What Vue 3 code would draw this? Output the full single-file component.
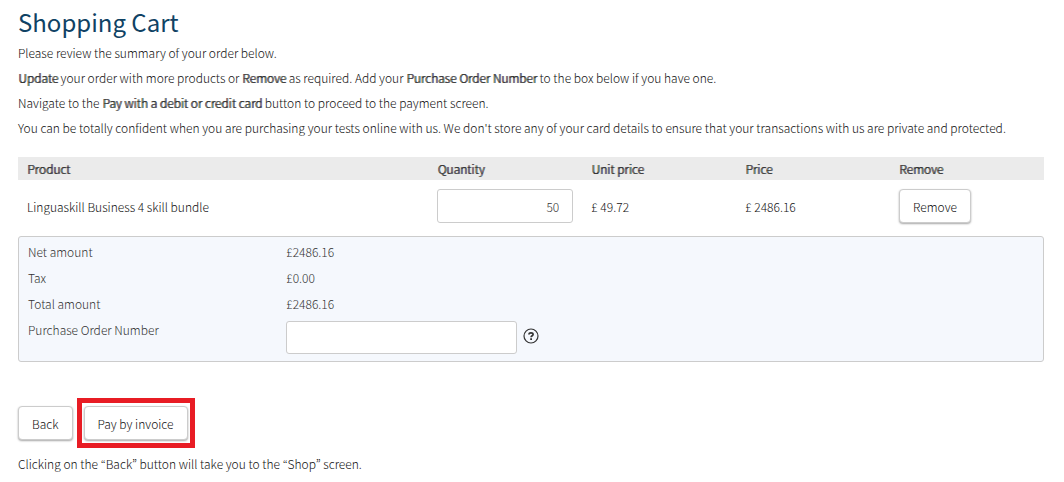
<template>
  <main class="cart-page">
    <h1 class="cart-title">Shopping Cart</h1>

    <div class="intro">
      <p>Please review the summary of your order below.</p>
      <p>
        <strong>Update</strong> your order with more products or <strong>Remove</strong> as required.
        Add your <strong>Purchase Order Number</strong> to the box below if you have one.
      </p>
      <p>
        Navigate to the <strong>Pay with a debit or credit card</strong> button to proceed to the
        payment screen.
      </p>
      <p>
        You can be totally confident when you are purchasing your tests online with us. We don't
        store any of your card details to ensure that your transactions with us are private and
        protected.
      </p>
    </div>

    <table class="cart-table">
      <thead>
        <tr>
          <th class="col-product" scope="col">Product</th>
          <th scope="col">Quantity</th>
          <th scope="col">Unit price</th>
          <th scope="col">Price</th>
          <th scope="col">Remove</th>
        </tr>
      </thead>
      <tbody>
        <tr v-for="item in items" :key="item.id">
          <td>{{ item.name }}</td>
          <td>
            <input
              v-model="item.quantity"
              class="field field-quantity"
              type="text"
              inputmode="numeric"
              :aria-label="`Quantity of ${item.name}`"
            />
          </td>
          <td>£ {{ item.unitPrice.toFixed(2) }}</td>
          <td>£ {{ item.price.toFixed(2) }}</td>
          <td><button class="btn" type="button">Remove</button></td>
        </tr>
      </tbody>
    </table>

    <section class="summary">
      <div v-for="row in totals" :key="row.label" class="summary-row">
        <span>{{ row.label }}</span>
        <span>£{{ row.amount.toFixed(2) }}</span>
      </div>
      <div class="summary-row">
        <label for="po-number">Purchase Order Number</label>
        <div class="po-field">
          <input id="po-number" v-model="poNumber" class="field field-po" type="text" />
          <button class="help" type="button" aria-label="Help">
            <svg viewBox="0 0 16 16" width="16" height="16" fill="none" stroke="#333">
              <circle cx="8" cy="8" r="7" stroke-width="1.2" />
              <path d="M5.9 6.5C6 5.300 6.900 4.800 8 4.800c1.200 0 2.100.6 2.100 1.600 0 1.300-2 1.400-2 2.800" stroke-width="1.700" />
              <path d="M8.100 10.200v1.700" stroke-width="1.800" />
            </svg>
          </button>
        </div>
      </div>
    </section>

    <div class="actions">
      <button class="btn" type="button">Back</button>
      <div class="highlight">
        <button class="btn" type="button">Pay by invoice</button>
      </div>
    </div>

    <p class="note">Clicking on the “Back” button will take you to the “Shop” screen.</p>
  </main>
</template>

<script setup>
import { ref } from 'vue';

const items = ref([
  { id: 1, name: 'Linguaskill Business 4 skill bundle', quantity: '50', unitPrice: 49.72, price: 2486.16 }
]);

const totals = [
  { label: 'Net amount', amount: 2486.16 },
  { label: 'Tax', amount: 0 },
  { label: 'Total amount', amount: 2486.16 }
];

const poNumber = ref('');
</script>

<style>
body {
  background: #fff;
}
</style>

<style scoped>
.cart-page {
  padding: 5px 20px 8px 18px;
  font-family: "Noto Sans CJK KR", "Open Sans", sans-serif;
  font-size: 12px;
  font-weight: 300;
  line-height: 17px;
  color: #111;
}

.cart-title {
  margin: 0 0 5px;
  font-size: 24px;
  font-weight: 400;
  line-height: 34px;
  color: #0f4264;
}

.intro p {
  margin: 0 0 8px;
}

/* bold at the same advance widths as the light text */
strong,
th {
  font-weight: 300;
  color: #333;
  text-shadow: 1px 0 currentColor;
}

.cart-table {
  width: 100%;
  margin-top: 21px;
  border-collapse: collapse;
  table-layout: fixed;
}

.cart-table th,
.cart-table td {
  box-sizing: border-box;
}

.cart-table th {
  width: 15%;
  padding: 3px 9px;
  background: #ebebeb;
  text-align: left;
}

.cart-table th.col-product {
  width: 40%;
}

.cart-table td {
  height: 56px;
  padding: 0 9px 4px;
}

.field {
  box-sizing: border-box;
  border: 1px solid #ccc;
  border-radius: 3px;
  background: #fff;
  font: inherit;
  color: #333;
}

.field-quantity {
  display: block;
  width: 100%;
  height: 34px;
  padding: 0 13px;
  text-align: right;
}

.btn {
  height: 34px;
  padding: 0 13px;
  border: 1px solid #ccc;
  border-radius: 4px;
  background: #fff;
  box-shadow: 0 1px 2px rgba(0, 0, 0, 0.35);
  font: inherit;
  color: #111;
  white-space: nowrap;
}

.summary {
  display: grid;
  gap: 9px;
  padding: 6px 9px 7px;
  border: 1px solid #ccc;
  border-radius: 3px;
  background: #f5f8fd;
  color: #333;
}

.summary-row {
  display: grid;
  grid-template-columns: 1fr 3fr;
  column-gap: 9px;
}

.po-field {
  display: flex;
  align-items: center;
  gap: 6px;
}

.field-po {
  width: 231px;
  height: 33px;
  padding: 0 12px;
}

.help {
  display: flex;
  padding: 0 0 4px;
  border: 0;
  background: none;
}

.actions {
  display: flex;
  align-items: center;
  gap: 4px;
  margin-top: 36px;
}

.highlight {
  padding: 3px 2px;
  border: 5px solid #e81c24;
}

.highlight .btn {
  display: block;
}

.note {
  margin: 7px 0 0;
}
</style>
